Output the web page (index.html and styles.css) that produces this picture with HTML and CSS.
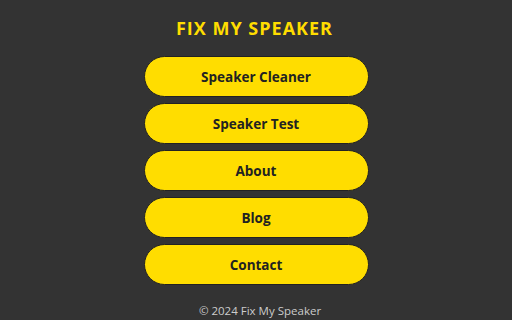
FILE: index.html
```html
<!DOCTYPE html>
<html lang="en">
<head>
  <meta charset="UTF-8" />
  <meta name="viewport" content="width=device-width, initial-scale=1.0"/>
  <title>Fix My Speaker</title>
  <link rel="stylesheet" href="styles.css">
</head>
<body>
  <div class="container">
    <h1>FIX MY SPEAKER</h1>
    <nav class="menu">
      <button class="menu-btn">Speaker Cleaner</button>
      <button class="menu-btn">Speaker Test</button>
      <button class="menu-btn">About</button>
      <button class="menu-btn">Blog</button>
      <button class="menu-btn">Contact</button>
    </nav>
    <footer>&copy; 2024 Fix My Speaker</footer>
  </div>
</body>
</html>
```

FILE: styles.css
```css
:root {
  --bg-color: #333333;
  --yellow: #ffdd00;
  --text-dark: #222222;
  --footer-text: #cccccc;
}

body {
  font-family: 'Open Sans', sans-serif;
  background-color: var(--bg-color);
  margin: 0;
  color: var(--text-dark);
}

.container {
  display: flex;
  flex-direction: column;
  align-items: center;
  padding-top: 14px;
}

h1 {
  color: var(--yellow);
  font-size: 18px;
  font-weight: bold;
  letter-spacing: 1px;
  margin: 0 0 14px -3px;
  line-height: 28px;
}

.menu {
  display: flex;
  flex-direction: column;
  gap: 6px;
}

.menu-btn {
  width: 225px;
  height: 41px;
  background-color: var(--yellow);
  color: var(--text-dark);
  border: 1px solid #222;
  border-radius: 21px;
  font-family: 'Open Sans', sans-serif;
  font-size: 13.5px;
  font-weight: bold;
  cursor: pointer;
}

footer {
  margin-top: 18px;
  padding-left: 8px;
  color: var(--footer-text);
  font-size: 11.5px;
}
```
